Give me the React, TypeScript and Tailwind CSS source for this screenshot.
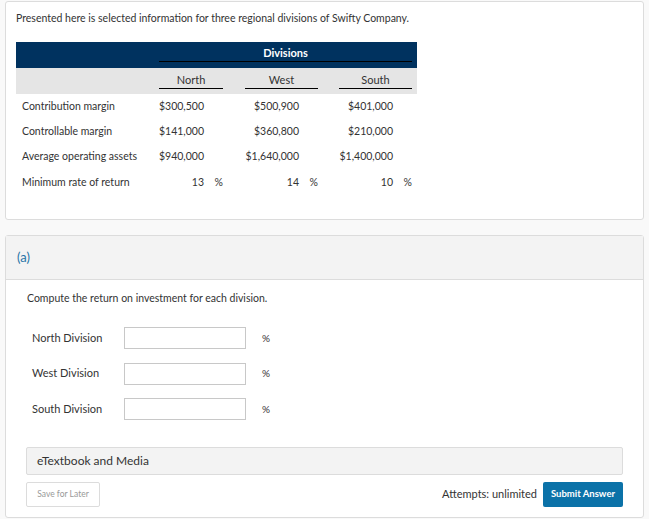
const rows = [
  { label: "Contribution margin", values: ["$300,500", "$500,900", "$401,000"], pct: false },
  { label: "Controllable margin", values: ["$141,000", "$360,800", "$210,000"], pct: false },
  { label: "Average operating assets", values: ["$940,000", "$1,640,000", "$1,400,000"], pct: false },
  { label: "Minimum rate of return", values: ["13", "14", "10"], pct: true },
];

const divisions = ["North Division", "West Division", "South Division"];

const gridCols = "grid grid-cols-[143px_64px_22px_73px_21px_73px_5px]";

export default function App() {
  return (
    <div
      className="min-h-[519px] w-full bg-[#f9f9f9] px-[5px] pt-[1px] text-[#333]"
      style={{ fontFamily: "Lato, 'Open Sans', sans-serif" }}
    >
      {/* Problem data */}
      <div className="rounded-[3px] border border-[#dcdcdc] bg-white pl-[10px] pt-[9px] pb-[23px]">
        <p className="text-[10.5px] leading-[14px]">
          Presented here is selected information for three regional divisions of Swifty Company.
        </p>

        <div className="mt-[17px] w-[401px] text-[10.5px]">
          {/* navy header */}
          <div className={`${gridCols} h-[26px] bg-[#00325f] pt-[4px]`}>
            <div />
            <div className="col-span-5">
              <div className="flex h-[16px] w-full items-center justify-center border-b border-black text-[11px] font-bold text-white">
                Divisions
              </div>
            </div>
            <div />
          </div>

          {/* column headers */}
          <div className={`${gridCols} h-[26px] bg-[#e5e5e5] pt-[4px] text-[11px]`}>
            <div />
            <div className="flex h-[17px] w-full items-center justify-center border-b border-black">North</div>
            <div />
            <div className="flex h-[17px] w-full items-center justify-center border-b border-black">West</div>
            <div />
            <div className="flex h-[17px] w-full items-center justify-center border-b border-black">South</div>
            <div />
          </div>

          {rows.map((row, i) => (
            <div
              key={row.label}
              className={`${gridCols} items-center ${i === rows.length - 1 ? "h-[27px]" : "h-[25px]"}`}
            >
              <div className="pl-[6px]">{row.label}</div>
              {[0, 1, 2].map((c) => (
                <div key={c} className={`flex ${c === 0 ? "col-start-2" : c === 1 ? "col-start-4" : "col-start-6"}`}>
                  <span className="flex-1 text-right">{row.values[c]}</span>
                  <span className="w-[19px] text-right">{row.pct ? "%" : ""}</span>
                </div>
              ))}
            </div>
          ))}
        </div>
      </div>

      {/* Part (a) */}
      <div className="mt-[15px] rounded-[3px] border border-[#dcdcdc] bg-white">
        <div className="flex h-[44px] items-center border-b border-[#dcdcdc] bg-[#f3f3f3] pl-[11px] text-[13px] text-[#2874a6]">
          (a)
        </div>

        <div className="px-[20px] pt-[11px] pb-[10px]">
          <p className="pl-[1px] text-[10.5px] leading-[14px]">
            Compute the return on investment for each division.
          </p>

          <div className="mt-[22px] flex flex-col gap-[13.5px]">
            {divisions.map((d) => (
              <div key={d} className="flex h-[22px] items-center">
                <span className="w-[98px] pl-[6px] text-[11px]">{d}</span>
                <input
                  type="text"
                  className="h-[22px] w-[122px] border border-[#c8c8c8] bg-white outline-none"
                />
                <span className="ml-[16px] text-[10px]">%</span>
              </div>
            ))}
          </div>

          <div className="mt-[27px] flex h-[28px] items-center rounded-[2px] border border-[#dcdcdc] bg-[#f3f3f3] pl-[10px] text-[12px]">
            eTextbook and Media
          </div>

          <div className="mt-[7px] flex h-[25px] items-center justify-between">
            <button className="flex h-[25px] w-[74px] items-center justify-center rounded-[2px] border border-[#dcdcdc] bg-white text-[8.5px] text-[#999]">
              Save for Later
            </button>
            <div className="flex items-center gap-[6px]">
              <span className="text-[11px]">Attempts: unlimited</span>
              <button className="flex h-[25px] w-[80px] items-center justify-center rounded-[2px] bg-[#0b72a8] text-[9.5px] font-bold text-white">
                Submit Answer
              </button>
            </div>
          </div>
        </div>
      </div>
    </div>
  );
}
